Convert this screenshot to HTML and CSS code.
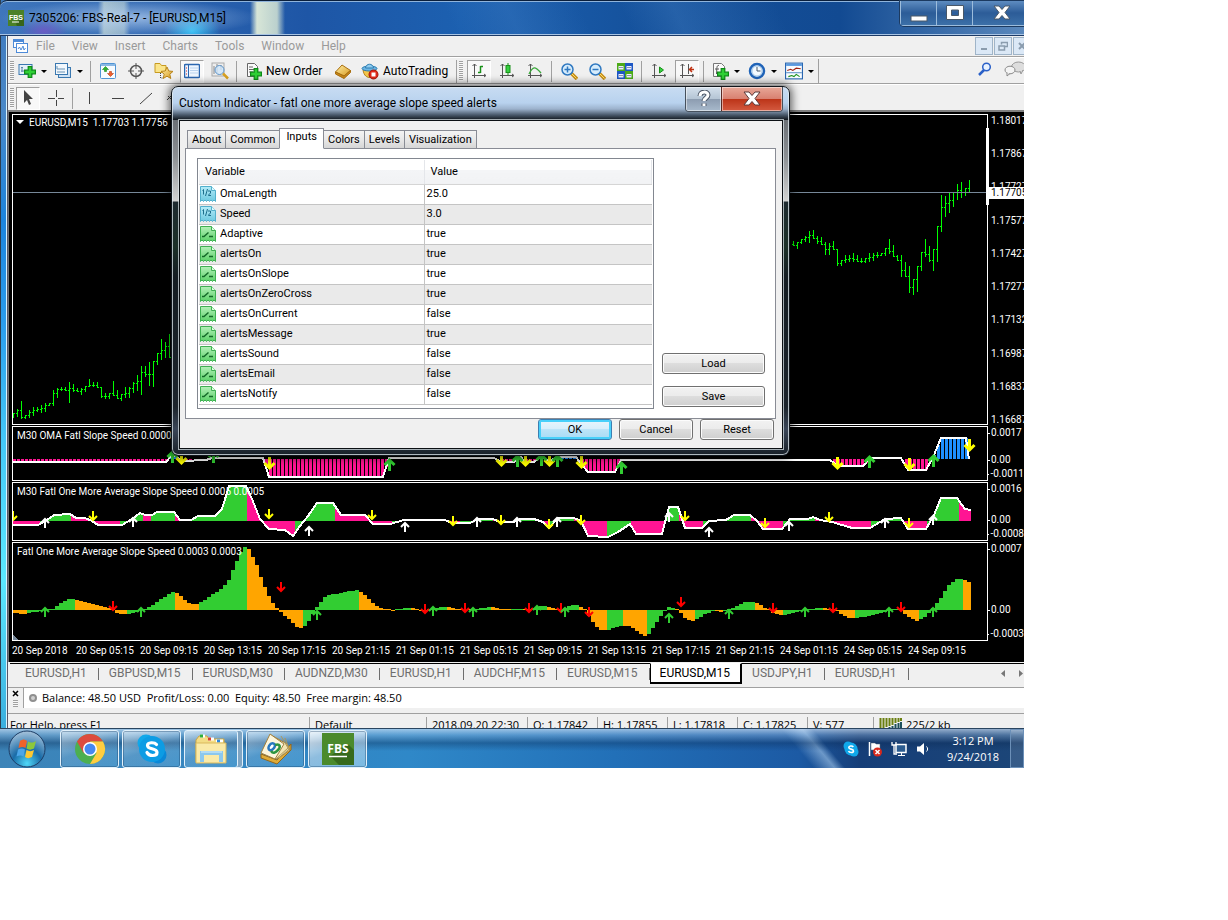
FILE: index.html
```html
<!DOCTYPE html>
<html lang="en">
<head>
  <meta charset="utf-8">
  <title>7305206: FBS-Real-7 - [EURUSD,M15]</title>
  <link rel="stylesheet" href="styles.css">
</head>
<body>
  <svg class="sprite" aria-hidden="true">
    <linearGradient id="greenFill" x1="0" y1="0" x2="0" y2="1"><stop offset="0" stop-color="#b4f0b8"/><stop offset="1" stop-color="#5ad068"/></linearGradient>
    <linearGradient id="blueFill" x1="0" y1="0" x2="0" y2="1"><stop offset="0" stop-color="#b6ecf8"/><stop offset="1" stop-color="#6cc8e0"/></linearGradient>
    <linearGradient id="goldFill" x1="0" y1="0" x2="1" y2="1"><stop offset="0" stop-color="#fff0a8"/><stop offset="1" stop-color="#d89a20"/></linearGradient>
    <symbol id="i-bool" viewBox="0 0 16 16">
      <path d="M.5.5h11l4 4v11l-1.500-1.500-1.500 1.500-1.500-1.500-1.500 1.500-1.500-1.500-1.500 1.500-1.500-1.500-1.500 1.500-1.500-1.500-1.500 1.500z" fill="url(#greenFill)" stroke="#3fb052"/>
      <path d="M11.500.5v4h4" fill="#e0ffe0" stroke="#3fb052"/>
      <path d="M2 10.500h2l4.500-4M9 10.500h4" fill="none" stroke="#146a28" stroke-width="1.500"/>
    </symbol>
    <symbol id="i-num" viewBox="0 0 16 16">
      <path d="M.5.5h11l4 4v11l-1.500-1.500-1.500 1.500-1.500-1.500-1.500 1.500-1.500-1.500-1.500 1.500-1.500-1.500-1.500 1.500-1.500-1.500-1.500 1.500z" fill="url(#blueFill)" stroke="#52b0cc"/>
      <path d="M11.500.5v4h4" fill="#e0faff" stroke="#52b0cc"/>
      <path d="M2.500 4.500l1-1v5M7.500 3l-2 7M8 5h2.500v2l-2 2v.5H11" fill="none" stroke="#1c6e8c"/>
    </symbol>
    <symbol id="i-plus" viewBox="0 0 10 10">
      <path d="M3.500.5h3v3h3v3h-3v3h-3v-3h-3v-3h3z" fill="#2fd035" stroke="#0d8a16"/>
    </symbol>
    <symbol id="i-axes" viewBox="0 0 16 16">
      <path d="M3.500 1v14M1.500 3l2-2 2 2M1 12.500h13.500M13 11l2 1.500-2 1.500" fill="none" stroke="#555"/>
    </symbol>
  </svg>

  <div class="desktop">
    <main class="app">
      <header class="titlebar">
        <svg class="logo" width="16" height="16" viewBox="0 0 16 16"><rect width="16" height="16" fill="#4b8128"/><path d="M8 14l5-9 3 4v7h-7z" fill="#37651a"/><text x="8" y="10" text-anchor="middle" class="logo-text">FBS</text><path d="M4 12h7" stroke="#fff"/></svg>
        <span class="title">7305206: FBS-Real-7 - [EURUSD,M15]</span>
        <div class="caption">
          <button aria-label="Minimize"><svg width="20" height="18"><rect x="2" y="12" width="16" height="5" fill="#fff" stroke="#4a5868"/></svg></button>
          <button aria-label="Maximize"><svg width="20" height="18"><path d="M1.500 1.500h17v14h-17zM6.500 6v5.500h7V6z" fill="#fff" fill-rule="evenodd" stroke="#4a5868"/></svg></button>
          <button class="wide" aria-label="Close"><svg width="20" height="18"><path d="M2 2h5l3 3.500L13 2h5l-5 6.500 5 6.500h-5l-3-3.500L7 15H2l5-6.500z" fill="#fff" stroke="#4a5868"/></svg></button>
        </div>
      </header>

      <div class="client">
        <nav class="menubar">
          <svg class="menu-icon" width="16" height="16" viewBox="0 0 16 16"><rect x="1.500" y="1.500" width="10" height="8" fill="#fff" stroke="#4d8bd8"/><path d="M2 3h9" stroke="#4d8bd8" stroke-width="2"/><rect x="4.500" y="5.500" width="11" height="9" fill="#fff" stroke="#4d8bd8"/><path d="M6 11l1.500-2 1.500 3 2-4 1 4 1.500-2" fill="none" stroke="#4d8bd8"/></svg>
          <a href="#">File</a><a href="#">View</a><a href="#">Insert</a><a href="#">Charts</a><a href="#">Tools</a><a href="#">Window</a><a href="#">Help</a>
          <div class="mdi">
            <button aria-label="Minimize chart"><svg width="10" height="10"><path d="M2 8h6" stroke="#8a9cae" stroke-width="2"/></svg></button>
            <button aria-label="Restore chart"><svg width="10" height="10"><path d="M3.500 3.500V1.500h6v4H7M1 5h5.500v4H1z" fill="none" stroke="#8a9cae" stroke-width="1.500"/></svg></button>
            <button aria-label="Close chart"><svg width="10" height="10"><path d="M2 2l6 6M8 2l-6 6" stroke="#8a9cae" stroke-width="2"/></svg></button>
          </div>
        </nav>

        <div class="toolbar">
          <i class="grip"></i>
          <button class="tool drop" aria-label="New chart"><svg width="18" height="18" viewBox="0 0 18 18"><rect x="1" y="2.500" width="13" height="10" fill="#e4f0fa" stroke="#3a78b0"/><path d="M4 10V5M3 6l1-1 1 1M3 9h5" stroke="#5d86a8" fill="none"/><use href="#i-plus" x="6" y="4" width="12" height="12"/></svg></button>
          <button class="tool drop" aria-label="Profiles"><svg width="18" height="18" viewBox="0 0 18 18"><rect x="4.500" y="5.500" width="12" height="10" fill="#cfe2f4" stroke="#3a78b0"/><rect x="1.500" y="1.500" width="12" height="11" fill="#f2f8fd" stroke="#3a78b0"/><path d="M3 4v3h8M3 10h8" fill="none" stroke="#6b93b5"/></svg></button>
          <i class="sep"></i>
          <button class="tool" aria-label="Market Watch"><svg width="16" height="16" viewBox="0 0 16 16"><rect x=".5" y=".5" width="15" height="15" rx="1" fill="#f6fbff" stroke="#4f94d4"/><path d="M1 2h14" stroke="#8ab8e4" stroke-width="2"/><path d="M5.500 3.500l3 3h-2v2h-2v-2h-2z" fill="#30b030" stroke="#178a17" stroke-width=".6"/><path d="M10.500 13.500l-3-3h2v-2h2v2h2z" fill="#f06030" stroke="#b83a10" stroke-width=".6"/></svg></button>
          <button class="tool" aria-label="Data Window"><svg width="16" height="16" viewBox="0 0 16 16"><circle cx="8" cy="8" r="5.500" fill="none" stroke="#555" stroke-width="1.500"/><path d="M8 0v6M8 10v6M0 8h6M10 8h6" stroke="#555"/></svg></button>
          <button class="tool" aria-label="Navigator"><svg width="20" height="18" viewBox="0 0 20 18"><path d="M1 1.500h5l1.500 2H12v7H1z" fill="#fbe58a" stroke="#c79a20"/><path d="M6.500 11v5h3" fill="none" stroke="#444" stroke-dasharray="1 1"/><path d="M13 5l1.800 4 4.200.4-3.200 2.800 1 4.300-3.800-2.300L9.200 16.500l1-4.300L7 9.400l4.200-.4z" fill="url(#goldFill)" stroke="#b8841a"/></svg></button>
          <button class="tool pressed" aria-label="Terminal"><svg width="16" height="16" viewBox="0 0 16 16"><rect x=".5" y="1.500" width="15" height="13" rx="1" fill="#eef6ff" stroke="#2a66b0" stroke-width="1.500"/><path d="M4.500 2v12" stroke="#2a66b0"/><path d="M2 5h1M2 8h1M2 11h1" stroke="#c22"/><path d="M6 5h8M6 7.500h8M6 10h8" stroke="#b9d2ee"/></svg></button>
          <button class="tool" aria-label="Strategy Tester"><svg width="18" height="18" viewBox="0 0 18 18"><rect x="1" y="1" width="12" height="13" fill="#eee" stroke="#aaa"/><path d="M3 4v8M6 2v9M10 3v5" stroke="#888"/><circle cx="8.500" cy="8" r="4.500" fill="#cfe6fa" fill-opacity=".8" stroke="#5c93c8"/><path d="M12 11.500l5 5" stroke="#d8a020" stroke-width="2.500"/></svg></button>
          <i class="sep"></i>
          <button class="tool order"><svg width="17" height="18" viewBox="0 0 17 18"><path d="M2.500 1.500h7l3 3v10h-10z" fill="#fafafa" stroke="#666"/><path d="M4 5h4M4 7.500h6M4 10h4" stroke="#666"/><use href="#i-plus" x="5" y="6" width="12" height="12"/></svg>New Order</button>
          <button class="tool" aria-label="MetaEditor"><svg width="18" height="18" viewBox="0 0 18 18"><path d="M1.500 10L8 3l8.500 5.500L10 14z" fill="url(#goldFill)" stroke="#a86e10"/><path d="M1.500 10v2L10 16.500l6.500-6v-2L10 14z" fill="#c98818" stroke="#a86e10"/></svg></button>
          <button class="tool auto"><svg width="18" height="18" viewBox="0 0 18 18"><path d="M2 8c1 6 4 7.500 7 7.500s5-2 6-7.500z" fill="#f3c54a" stroke="#b8841a"/><ellipse cx="8.500" cy="6.500" rx="7.500" ry="2.500" fill="#6db6e4" stroke="#2c7cb0"/><path d="M4.500 6C5 1 12 1 12.500 6z" fill="#8fccf0" stroke="#2c7cb0"/><circle cx="12.500" cy="12.500" r="4.500" fill="#e02818" stroke="#a81408"/><rect x="10.500" y="10.500" width="4" height="4" fill="#fff"/></svg>AutoTrading</button>
          <i class="grip"></i>
          <button class="tool pressed" aria-label="Bar Chart"><svg width="16" height="16" viewBox="0 0 16 16"><use href="#i-axes"/><path d="M9.500 3v7M9.500 3.500h2.500M7 9.500h2.500" stroke="#189018" stroke-width="1.500"/></svg></button>
          <button class="tool" aria-label="Candlesticks"><svg width="16" height="16" viewBox="0 0 16 16"><use href="#i-axes"/><path d="M9 0v12" stroke="#189018"/><rect x="7" y="2.500" width="4" height="7" fill="#35d040" stroke="#189018"/></svg></button>
          <button class="tool" aria-label="Line Chart"><svg width="16" height="16" viewBox="0 0 16 16"><use href="#i-axes"/><path d="M2 11c4-8 6-8 12-1" fill="none" stroke="#39a839" stroke-width="1.300"/></svg></button>
          <i class="sep"></i>
          <button class="tool" aria-label="Zoom In"><svg width="17" height="17" viewBox="0 0 17 17"><path d="M10 10l6 6" stroke="#c89018" stroke-width="3.500"/><path d="M10.500 10.500l5 5" stroke="#ffe070"/><circle cx="6.500" cy="6.500" r="5.500" fill="#d6ecfc" stroke="#2f78c0" stroke-width="1.500"/><path d="M3.500 6.500h6M6.500 3.500v6" stroke="#2f78c0" stroke-width="1.500"/></svg></button>
          <button class="tool" aria-label="Zoom Out"><svg width="17" height="17" viewBox="0 0 17 17"><path d="M10 10l6 6" stroke="#c89018" stroke-width="3.500"/><path d="M10.500 10.500l5 5" stroke="#ffe070"/><circle cx="6.500" cy="6.500" r="5.500" fill="#d6ecfc" stroke="#2f78c0" stroke-width="1.500"/><path d="M3.500 6.500h6" stroke="#2f78c0" stroke-width="1.500"/></svg></button>
          <button class="tool" aria-label="Tile Windows"><svg width="16" height="16" viewBox="0 0 16 16"><path d="M0 0h8v8H0zM8 8h8v8H8z" fill="#4caa18"/><path d="M8 0h8v8H8zM0 8h8v8H0z" fill="#1d57c4"/><path d="M1.500 3h5v3.500h-5zM9.500 3h5v3.500h-5zM1.500 11h5v3.500h-5zM9.500 11h5v3.500h-5z" fill="#eef"/><path d="M2 4.500h4M10 4.500h4M2 12.500h4M10 12.500h4" stroke="#89a"/></svg></button>
          <i class="sep"></i>
          <button class="tool" aria-label="Auto Scroll"><svg width="16" height="16" viewBox="0 0 16 16"><use href="#i-axes"/><path d="M8.500 4v6l4-3z" fill="#35d040" stroke="#189018"/></svg></button>
          <button class="tool pressed" aria-label="Chart Shift"><svg width="16" height="16" viewBox="0 0 16 16"><use href="#i-axes"/><path d="M9.500 1v10" stroke="#555"/><path d="M15 6.500h-4M13 4l-2.500 2.500L13 9" fill="none" stroke="#c03010" stroke-width="1.500"/></svg></button>
          <i class="sep"></i>
          <button class="tool drop late" aria-label="Indicators"><svg width="18" height="18" viewBox="0 0 18 18"><path d="M2.500 1.500h8l3 3v10h-11z" fill="#fafafa" stroke="#777"/><path d="M8 3.500C5.500 3 6 6 5.500 12M4 7h4" fill="none" stroke="#555"/><use href="#i-plus" x="6" y="6" width="12" height="12"/></svg></button>
          <button class="tool drop late" aria-label="Periods"><svg width="18" height="18" viewBox="0 0 18 18"><circle cx="9" cy="9" r="7" fill="#f4faff" stroke="#1f63b8" stroke-width="2.500"/><circle cx="9" cy="9" r="5" fill="none" stroke="#90bce4" stroke-width=".8"/><path d="M9 5v4h3.500" fill="none" stroke="#456"/></svg></button>
          <button class="tool drop late" aria-label="Templates"><svg width="18" height="18" viewBox="0 0 16 16"><rect x=".5" y="1" width="15" height="14" fill="#f8fcff" stroke="#2a66b0"/><path d="M1 2.500h14" stroke="#5a9ae0" stroke-width="2"/><path d="M2 7.500l3-1 2 1 3-2 4 .5" fill="none" stroke="#a02010"/><path d="M1 9.500h14" stroke="#6a9ac8"/><path d="M3 13l3-1 2 1 2-2 3 2" fill="none" stroke="#189018"/></svg></button>
          <i class="bar-end"></i>
          <div class="right-tools">
            <button aria-label="Search"><svg width="14" height="14" viewBox="0 0 14 14"><path d="M6 8l-5 5" stroke="#2a60c8" stroke-width="2.500"/><circle cx="8.500" cy="5" r="3.800" fill="#e8f2ff" stroke="#2a60c8" stroke-width="1.500"/></svg></button>
            <button aria-label="Messages"><svg width="22" height="16" viewBox="0 0 22 16"><ellipse cx="14.500" cy="6" rx="7" ry="5" fill="#ddd" stroke="#999"/><path d="M16 10l1 3 2-4" fill="#ddd" stroke="#999"/><ellipse cx="6" cy="9" rx="5" ry="3.800" fill="#f4f4f4" stroke="#888"/><path d="M3 12v3l3-2.500" fill="#f4f4f4" stroke="#888"/></svg></button>
          </div>
        </div>

        <div class="toolbar lines">
          <i class="grip"></i>
          <button class="tool pressed" aria-label="Cursor"><svg width="16" height="18" viewBox="0 0 16 18"><path d="M4 1v13l3-3 2 5 2-1-2-5h4z" fill="#444"/></svg></button>
          <button class="tool" aria-label="Crosshair"><svg width="16" height="16"><path d="M8.500 0v7M8.500 10v6M0 8.500h7M10 8.500h6" stroke="#444"/></svg></button>
          <i class="sep"></i>
          <button class="tool" aria-label="Vertical Line"><svg width="16" height="16"><path d="M7.500 2v12" stroke="#444"/></svg></button>
          <button class="tool" aria-label="Horizontal Line"><svg width="16" height="16"><path d="M2 8.500h12" stroke="#444"/></svg></button>
          <button class="tool" aria-label="Trendline"><svg width="16" height="16"><path d="M2 14L14 3" stroke="#444"/></svg></button>
          <button class="tool" aria-label="Channel"><svg width="16" height="16"><path d="M1 10l8-8M5 14l9-9M2 6l8 8" stroke="#444"/></svg></button>
        </div>

        <section class="charts">
          <div class="panel">
            <div class="plot main-plot">
              <svg id="price" width="974" height="309" viewBox="13 115 974 309"></svg>
              <span class="plot-label"><i class="tri"></i>EURUSD,M15&nbsp; 1.17703 1.17756 1.17697 1.17705</span>
              <i class="scale-mark"></i>
            </div>
            <ul class="axis price-axis">
              <li>1.18017</li><li>1.17867</li><li>1.17727</li><li>1.17577</li><li>1.17427</li>
              <li>1.17277</li><li>1.17132</li><li>1.16987</li><li>1.16837</li><li>1.16687</li>
              <li class="last-price">1.17705</li>
            </ul>
          </div>
          <div class="panel">
            <div class="plot">
              <svg id="oma" width="974" height="53" viewBox="13 427 974 53"></svg>
              <span class="plot-label">M30 OMA Fatl Slope Speed 0.0000 0.0013</span>
            </div>
            <ul class="axis"><li>0.0017</li><li>0.00</li><li>-0.0011</li></ul>
          </div>
          <div class="panel">
            <div class="plot">
              <svg id="slope" width="974" height="57" viewBox="13 483 974 57"></svg>
              <span class="plot-label">M30 Fatl One More Average Slope Speed 0.0005 0.0005</span>
            </div>
            <ul class="axis"><li>0.0016</li><li>0.00</li><li>-0.0008</li></ul>
          </div>
          <div class="panel">
            <div class="plot">
              <svg id="speed" width="974" height="97" viewBox="13 543 974 97"></svg>
              <span class="plot-label">Fatl One More Average Slope Speed 0.0003 0.0003</span>
            </div>
            <ul class="axis tall"><li>0.0007</li><li>0.00</li><li>-0.0003</li></ul>
          </div>
          <div class="times">
            <span>20 Sep 2018</span><span>20 Sep 05:15</span><span>20 Sep 09:15</span><span>20 Sep 13:15</span><span>20 Sep 17:15</span>
            <span>20 Sep 21:15</span><span>21 Sep 01:15</span><span>21 Sep 05:15</span><span>21 Sep 09:15</span><span>21 Sep 13:15</span>
            <span>21 Sep 17:15</span><span>21 Sep 21:15</span><span>24 Sep 01:15</span><span>24 Sep 05:15</span><span>24 Sep 09:15</span>
          </div>
        </section>

        <nav class="chart-tabs">
          <a href="#">EURUSD,H1</a><a href="#">GBPUSD,M15</a><a href="#">EURUSD,M30</a><a href="#">AUDNZD,M30</a><a href="#">EURUSD,H1</a><a href="#">AUDCHF,M15</a><a href="#">EURUSD,M15</a><a href="#" class="active">EURUSD,M15</a><a href="#">USDJPY,H1</a><a href="#">EURUSD,H1</a>
          <div class="scrollers">
            <button aria-label="Scroll left"><svg width="6" height="8"><path d="M5 0v7L1 3.500z" fill="#777"/></svg></button>
            <button aria-label="Scroll right"><svg width="6" height="8"><path d="M1 0v7l4-3.500z" fill="#777"/></svg></button>
          </div>
        </nav>

        <div class="terminal">
          <div class="terminal-side">
            <button aria-label="Close terminal"><svg width="7" height="7"><path d="M1 1l5 5M6 1L1 6" stroke="#000" stroke-width="1.500"/></svg></button>
            <i></i>
          </div>
          <div class="balance"><i class="dot"></i>Balance: 48.50 USD&nbsp; Profit/Loss: 0.00&nbsp; Equity: 48.50&nbsp; Free margin: 48.50</div>
        </div>

        <footer class="statusbar">
          <span class="help">For Help, press F1</span>
          <span class="profile">Default</span>
          <span class="date">2018.09.20 22:30</span>
          <span>O: 1.17842</span>
          <span>H: 1.17855</span>
          <span>L: 1.17818</span>
          <span>C: 1.17825</span>
          <span class="vol">V: 577</span>
          <span class="traffic"><svg width="23" height="11"><path d="M1.500 0v10M4.500 0v10M7.500 0v9M10.500 0v8M13.500 0v7M16.500 0v5M19.500 0v4M22 0v3" stroke="#6a7f10" stroke-width="2"/><path d="M10.500 9v2M13.500 8v3M16.500 6v5M19.500 5v6M22 4v7" stroke="#1c4f5c" stroke-width="2"/></svg>225/2 kb</span>
        </footer>
      </div>
    </main>

    <div class="taskbar">
      <button class="orb" aria-label="Start"><svg width="38" height="38" viewBox="0 0 38 38"><defs><radialGradient id="orbFill" cx=".5" cy=".9" r=".9"><stop offset="0" stop-color="#4fd8f8"/><stop offset=".45" stop-color="#1a6ca8"/><stop offset="1" stop-color="#a8c4dc"/></radialGradient></defs><circle cx="19" cy="19" r="18" fill="url(#orbFill)" stroke="#1c3d66"/><path d="M12 11c3-2 5-2 7 0l-1.500 7c-2-1.500-4-1.500-7 0z" fill="#f0632a"/><path d="M20 11.500c2 1.500 5 1.500 8-.5l-2 7.500c-3 1.500-5 1.500-7.500 0z" fill="#8cc83c"/><path d="M10 19.500c3-1.500 5-1.500 7 0l-1.500 7c-2-1.500-4-1.500-7 0z" fill="#4ca6e8"/><path d="M18.500 20c2.500 1.500 5 1.500 7.500 0l-2 7c-3 1.500-5 1.500-7 0z" fill="#fcc832"/></svg></button>
      <div class="tasks">
        <button aria-label="Chrome"><svg width="32" height="32" viewBox="0 0 32 32"><circle cx="16" cy="16" r="15" fill="#4caf50"/><path d="M16 16L3 8.500A15 15 0 0 1 29 8.500H16z" fill="#dd4b3e"/><path d="M16 8.500h13A15 15 0 0 1 16 31l6.500-11z" fill="#ffcd40"/><path d="M3 8.500L9.500 20 16 8.500z" fill="#dd4b3e"/><circle cx="16" cy="16" r="7" fill="#fff"/><circle cx="16" cy="16" r="5.500" fill="#4688f0"/></svg></button>
        <button aria-label="Skype"><svg width="32" height="32" viewBox="0 0 32 32"><circle cx="10" cy="10" r="8.500" fill="#10a8ea"/><circle cx="22" cy="22" r="8.500" fill="#0a88d8"/><circle cx="16" cy="16" r="13" fill="#0d9ce4"/><path d="M20.500 11.500c-2-2.500-9-2.500-9 1 0 4.500 9.500 2 9.500 7 0 4-8 4-10 0" fill="none" stroke="#fff" stroke-width="3.200" stroke-linecap="round"/></svg></button>
        <button class="stack" aria-label="Explorer"><svg width="34" height="32" viewBox="0 0 34 32"><path d="M2 7l3-4h8l2 3h15v23H2z" fill="#f3dc84" stroke="#c9a545"/><path d="M6 3h5M14 6h6M22 8h7" stroke="#fff" stroke-width="3"/><path d="M6 3h3" stroke="#2fae3c" stroke-width="3"/><path d="M14 6h3" stroke="#d84030" stroke-width="3"/><path d="M23 8h3" stroke="#3088d8" stroke-width="3"/><path d="M2 10h30v20H2z" fill="#faeaa8" stroke="#d9b95c"/><path d="M8 29v-9h19v9" fill="none" stroke="#8cc8ee" stroke-width="4"/><path d="M7 19h21" stroke="#d6effc"/></svg></button>
        <button aria-label="MetaEditor"><svg width="34" height="32" viewBox="0 0 34 32"><path d="M2 21v4l16 6 14-14v-6L18 27z" fill="#e0ac38" stroke="#94671a"/><path d="M12 2l16 9 3 6-13 9L3 19z" fill="#f4e6b4" stroke="#a08040"/><path d="M22 3l7 12-11 10M26 5l4 11-10 9" fill="none" stroke="#b09858"/><path d="M11 1l14 10-9 15L2 20z" fill="#fdf6dc" stroke="#a08040"/><path d="M10 13c3-5 8-2 5 2s-7 2-5-2z" fill="#fff" stroke="#2878c0" stroke-width="2.500"/><path d="M16 12c5-2 6 2 3 5s-5 4-7 1" fill="none" stroke="#2d9440" stroke-width="2.500"/></svg></button>
        <button class="current" aria-label="FBS"><svg width="32" height="32" viewBox="0 0 32 32"><rect width="32" height="32" fill="#4b8a2c"/><path d="M26 11l6 6v15H17l-9-9z" fill="#376a1c"/><text x="16" y="20" text-anchor="middle" class="fbs-text">FBS</text><path d="M7 23.500h18" stroke="#fff" stroke-width="1.500"/></svg></button>
      </div>
      <div class="tray">
        <svg width="16" height="16" viewBox="0 0 16 16"><circle cx="5" cy="5" r="4.500" fill="#10a8ea"/><circle cx="11" cy="11" r="4.500" fill="#10a8ea"/><circle cx="8" cy="8" r="6.500" fill="#10a8ea"/><path d="M10.300 6c-1-1.500-4.500-1.300-4.500.5 0 2.200 4.700 1 4.700 3.400 0 2-4 2-5 .2" fill="none" stroke="#fff" stroke-width="1.600"/></svg>
        <svg width="16" height="16" viewBox="0 0 16 16"><path d="M2.500 1v14" stroke="#fff" stroke-width="1.500"/><path d="M4 2h4l1 1h4v6H4z" fill="#fff" stroke="#567" stroke-width=".5"/><circle cx="10.500" cy="11" r="4.500" fill="#d8281c"/><path d="M8.500 9l4 4M12.500 9l-4 4" stroke="#fff" stroke-width="1.500"/></svg>
        <svg width="16" height="16" viewBox="0 0 16 16"><path d="M5 3.500h10v8H5z" fill="#2c5c90" stroke="#fff" stroke-width="1.500"/><path d="M7 14.500h7M10.500 12v2" stroke="#fff"/><path d="M1 1v3h4V1M3 4v9h3" fill="none" stroke="#fff" stroke-width="1.300"/></svg>
        <svg width="16" height="16" viewBox="0 0 16 16"><path d="M2 5.500h3L9 2v12l-4-3.500H2z" fill="#fff"/><path d="M11.500 5.500c1.500 1.500 1.500 3.500 0 5" fill="none" stroke="#fff"/></svg>
      </div>
      <div class="clock"><span>3:12 PM</span><span>9/24/2018</span></div>
      <button class="show-desktop" aria-label="Show desktop"></button>
    </div>

    <section class="dialog" role="dialog" aria-label="Custom Indicator">
      <header class="dialog-title">
        <span>Custom Indicator - fatl one more average slope speed alerts</span>
        <div class="dialog-caption">
          <button aria-label="Help"><svg width="16" height="18" viewBox="0 0 16 18"><path d="M4 6c0-5 8-5 8-1 0 3-4 3-4 6M8 13.500v2.500" fill="none" stroke="#4a5464" stroke-width="5"/><path d="M4 6c0-5 8-5 8-1 0 3-4 3-4 6M8 13.500v2.500" fill="none" stroke="#fff" stroke-width="3"/></svg></button>
          <button class="close" aria-label="Close"><svg width="20" height="18"><path d="M2 2h5l3 3.500L13 2h5l-5 6.500 5 6.500h-5l-3-3.500L7 15H2l5-6.500z" fill="#fff" stroke="#5a3a3a"/></svg></button>
        </div>
      </header>
      <div class="dialog-body">
        <div class="tabs">
          <button>About</button><button>Common</button><button class="active">Inputs</button><button>Colors</button><button>Levels</button><button>Visualization</button>
        </div>
        <div class="tab-panel">
          <div class="list">
            <table>
              <thead><tr><th>Variable</th><th>Value</th></tr></thead>
              <tbody>
                <tr><td><svg class="type"><use href="#i-num"/></svg>OmaLength</td><td>25.0</td></tr>
                <tr><td><svg class="type"><use href="#i-num"/></svg>Speed</td><td>3.0</td></tr>
                <tr><td><svg class="type"><use href="#i-bool"/></svg>Adaptive</td><td>true</td></tr>
                <tr><td><svg class="type"><use href="#i-bool"/></svg>alertsOn</td><td>true</td></tr>
                <tr><td><svg class="type"><use href="#i-bool"/></svg>alertsOnSlope</td><td>true</td></tr>
                <tr><td><svg class="type"><use href="#i-bool"/></svg>alertsOnZeroCross</td><td>true</td></tr>
                <tr><td><svg class="type"><use href="#i-bool"/></svg>alertsOnCurrent</td><td>false</td></tr>
                <tr><td><svg class="type"><use href="#i-bool"/></svg>alertsMessage</td><td>true</td></tr>
                <tr><td><svg class="type"><use href="#i-bool"/></svg>alertsSound</td><td>false</td></tr>
                <tr><td><svg class="type"><use href="#i-bool"/></svg>alertsEmail</td><td>false</td></tr>
                <tr><td><svg class="type"><use href="#i-bool"/></svg>alertsNotify</td><td>false</td></tr>
              </tbody>
            </table>
          </div>
          <div class="side">
            <button class="btn">Load</button>
            <button class="btn">Save</button>
          </div>
        </div>
        <div class="actions">
          <button class="btn default">OK</button>
          <button class="btn">Cancel</button>
          <button class="btn">Reset</button>
        </div>
      </div>
    </section>
  </div>

  <script src="charts.js"></script>
</body>
</html>
```

FILE: styles.css
```css
* {
  box-sizing: border-box;
}
body {
  margin: 0;
  background: #fff;
  font-family: "Open Sans", "Noto Sans", sans-serif;
  font-size: 11px;
  line-height: 16px;
  color: #000;
}
button {
  font: inherit;
  color: inherit;
  background: none;
  border: none;
  padding: 0;
}
a {
  color: inherit;
  text-decoration: none;
}
ul {
  list-style: none;
  margin: 0;
  padding: 0;
}
.sprite {
  position: absolute;
  width: 0;
  height: 0;
}
.desktop {
  position: relative;
  width: calc(100% - 204px);
  overflow: hidden;
  white-space: nowrap;
}
.title, .menubar, .order, .auto, .chart-tabs, .dialog-title {
  font-family: Roboto, "Noto Sans", sans-serif;
  font-size: 12px;
}

/* main window */
.app {
  padding-left: 8px;
  background: linear-gradient(90deg, #2c3e50 0, #2c3e50 1px, transparent 1px, transparent 6px, #d8f4ff 6px, #d8f4ff 7px, #556 7px, #556 8px, transparent 8px),
    linear-gradient(#3d78bc 0, #4a88c8 110px, #1c84dc 220px, #2a9cec 320px, #44c8f8 440px, #5be8ff 580px, #3aaede 728px);
}
.titlebar {
  display: flex;
  height: 36px;
  margin-left: -8px;
  padding-left: 8px;
  align-items: flex-start;
  border-top: 1px solid #0a1f3c;
  border-bottom: 1px solid #1c3a66;
  border-top-left-radius: 7px;
  box-shadow: inset 0 1px #8fb4dc, inset 0 -1px #a8c4e4;
  background:
    radial-gradient(ellipse 24px 12px at 44px 30px, #6a5cc4, transparent),
    radial-gradient(ellipse 130px 18px at 130px 17px, rgba(190, 215, 245, .7), transparent),
    linear-gradient(90deg, transparent 98px, rgba(235, 245, 220, .6) 104px, rgba(225, 238, 215, .5) 124px, transparent 130px),
    radial-gradient(ellipse 28px 22px at 192px 30px, #38c0f4, transparent),
    linear-gradient(90deg, transparent 250px, rgba(235, 245, 220, .9) 257px, rgba(225, 238, 215, .8) 277px, transparent 285px),
    linear-gradient(65deg, transparent 44%, rgba(90, 150, 215, .2) 50%, transparent 57%, transparent 61%, rgba(90, 150, 215, .25) 66%, transparent 76%),
    linear-gradient(90deg, #3f76bc, #1e56a6 30%, #1c60b0 45%, #14509a 65%, #124a92 82%, #5a88bc);
}
.logo {
  margin-top: 9px;
}
.logo-text {
  font: bold 7px "Liberation Sans", sans-serif;
  fill: #fff;
}
.title {
  margin: 9px 0 0 5px;
}
.caption {
  display: flex;
  margin: 0 -8px 0 auto;
  border: 1px solid #9cbcdc;
  border-top: none;
  border-radius: 0 0 4px 4px;
  box-shadow: 0 0 0 1px #1c3a60;
}
.caption button {
  width: 36px;
  height: 24px;
  line-height: 0;
  border-right: 1px solid #9cbcdc;
  background: linear-gradient(#5e8cc0, #2c5c98 50%, #3c70a8);
}
.caption .wide {
  width: 58px;
}
.client {
  background: #f0f0f0;
}
.menubar {
  display: flex;
  align-items: center;
  height: 21px;
  padding-left: 4px;
  color: #9a9a9a;
  border-bottom: 1px solid #a0a0a0;
}
.menubar a {
  margin-left: 17px;
}
.menu-icon + a {
  margin-left: 8px;
}
.mdi {
  display: flex;
  gap: 1px;
  margin: 0 -7px 0 auto;
}
.mdi button {
  width: 18px;
  height: 18px;
  border: 1px solid #9fb4c8;
  background: #dbe8f6;
  line-height: 0;
}

/* toolbars */
.toolbar {
  display: flex;
  align-items: center;
  height: 27px;
  padding-top: 2px;
  border-bottom: 1px solid #a0a0a0;
  box-shadow: inset 0 1px #fff;
}
.lines {
  height: 28px;
  border-bottom: 2px solid #808080;
}
.grip {
  width: 4px;
  height: 20px;
  margin: 0 2px;
  background: repeating-linear-gradient(#a0a0a0 0, #a0a0a0 1px, #f8f8f8 1px, #f8f8f8 2px);
}
.lines .grip {
  margin-right: 0;
}
.sep {
  width: 1px;
  height: 21px;
  margin: 0 3px 0 2px;
  background: #a0a0a0;
}
.bar-end {
  width: 1px;
  height: 25px;
  background: #a0a0a0;
}
.tool {
  display: flex;
  flex: none;
  align-items: center;
  justify-content: center;
  width: 28px;
  height: 23px;
}
.pressed {
  background: #f8f8f8;
  border: 1px solid;
  border-color: #a0a0a0 #fff #fff #a0a0a0;
  width: 24px;
  margin: 0 2px;
}
.drop {
  width: 36px;
  justify-content: flex-start;
  padding-left: 2px;
}
.late {
  width: 37px;
  padding-left: 4px;
}
.drop::after {
  content: "";
  margin-left: 5px;
  border: 3px solid transparent;
  border-top-color: #000;
  border-bottom: none;
}
.order, .auto {
  gap: 4px;
  justify-content: flex-start;
}
.order {
  width: 89px;
  padding-left: 5px;
}
.auto {
  width: 100px;
  padding-left: 4px;
  border-right: 1px solid #a0a0a0;
}
.right-tools {
  display: flex;
  gap: 12px;
  margin: 0 -2px 0 auto;
  align-items: center;
}

/* charts */
.charts {
  display: flex;
  flex-direction: column;
  gap: 1px;
  height: 550px;
  padding: 2px 0 0 3px;
  background: #000;
  border-left: 1px solid #707070;
  color: #fff;
  font-family: Roboto, "Noto Sans", sans-serif;
  font-size: 10px;
  line-height: 14px;
}
.panel {
  display: flex;
}
.plot {
  position: relative;
  flex: 1;
  min-width: 0;
  border: 1px solid #fff;
}
.plot svg {
  display: block;
  shape-rendering: crispEdges;
}
.plot-label {
  position: absolute;
  left: 4px;
  top: 2px;
}
.tri {
  display: inline-block;
  margin: 0 5px 2px -1px;
  border: 4px solid transparent;
  border-top-color: #fff;
  border-bottom: none;
}
.main-plot .plot-label {
  top: 1px;
}
.scale-mark {
  position: absolute;
  right: -2px;
  top: 13px;
  width: 3px;
  height: 77px;
  background: #fff;
}
.axis {
  display: flex;
  flex-direction: column;
  position: relative;
  width: 36px;
}
.axis li {
  display: flex;
  align-items: center;
  gap: 1px;
}
.axis li::before {
  content: "";
  width: 2px;
  height: 1px;
  background: #fff;
}
.axis li:nth-child(2) {
  margin-top: auto;
}
.tall li:nth-child(2) {
  margin-bottom: 10px;
}
.price-axis {
  justify-content: space-between;
  margin-bottom: -2px;
}
.price-axis li {
  gap: 3px;
}
.price-axis li:nth-child(2) {
  margin-top: 0;
}
.price-axis .last-price {
  position: absolute;
  left: 0;
  top: 73px;
  width: 36px;
  height: 12px;
  line-height: 12px;
  color: #000;
  background: #fff;
}
.times {
  display: flex;
  line-height: 18px;
}
.times span {
  flex: none;
  width: 64px;
}

.chart-tabs {
  display: flex;
  height: 25px;
  padding: 1px 0 3px 2px;
  color: #6e6e6e;
  line-height: 18px;
}
.chart-tabs a {
  padding: 0 12px 0 10px;
  border-top: 1px solid #000;
  background: linear-gradient(#6e6e6e, #6e6e6e) right 4px / 1px 12px no-repeat;
}
.chart-tabs a:first-child {
  padding-left: 15px;
}
.chart-tabs .active {
  color: #000;
  background: #fff;
  border: 1px solid #000;
  border-top: 1px solid #fff;
  border-width: 1px 2px 2px 1px;
  padding: 0 10px 0 9px;
}
.scrollers {
  display: flex;
  flex: 1;
  gap: 12px;
  justify-content: flex-end;
  border-top: 1px solid #000;
}
.terminal {
  display: flex;
  height: 27px;
  padding-bottom: 5px;
  border-top: 1px solid #a0a0a0;
  border-bottom: 1px solid #a0a0a0;
}
.terminal-side {
  width: 15px;
  padding: 2px 4px;
  line-height: 0;
}
.terminal-side i {
  display: block;
  width: 5px;
  height: 7px;
  margin: 3px 1px;
  background: repeating-linear-gradient(#a0a0a0 0, #a0a0a0 1px, #f8f8f8 1px, #f8f8f8 2px);
}
.balance {
  flex: 1;
  display: flex;
  align-items: center;
  padding-left: 5px;
  background: #fff;
  border-left: 1px solid #a0a0a0;
}
.dot {
  width: 8px;
  height: 8px;
  margin-right: 5px;
  border: 2px solid #909090;
  border-radius: 50%;
  background: #d0d0d0;
}
.statusbar {
  display: flex;
  height: 14px;
  padding-top: 3px;
  overflow: hidden;
}
.statusbar span {
  flex: none;
  width: 70px;
  height: 16px;
  padding-left: 5px;
  border-left: 1px solid #a0a0a0;
}
.statusbar .help {
  width: 301px;
  padding-left: 2px;
  border: none;
}
.statusbar .profile {
  width: 117px;
}
.statusbar .date {
  width: 101px;
}
.statusbar .vol {
  width: 66px;
}
.statusbar .traffic {
  flex: 1;
}
.traffic svg {
  margin-right: 4px;
}

/* taskbar */
.taskbar {
  display: flex;
  align-items: center;
  height: 40px;
  border-top: 1px solid #2a4560;
  background:
    linear-gradient(rgba(215, 232, 250, .65), rgba(170, 200, 230, .35) 6px, rgba(10, 40, 80, .35) 14px, transparent 22px),
    linear-gradient(50deg, transparent 77%, rgba(190, 225, 255, .5) 79%, transparent 80%),
    linear-gradient(90deg, #3d84b8 0, #2f88c8 40%, #2270b8 60%, #1c5aa4 78%, #163e78 84%, #1c4678);
  color: #fff;
}
.orb {
  flex: none;
  width: 60px;
  padding-right: 6px;
  line-height: 0;
}
.tasks {
  display: flex;
  gap: 3px;
}
.tasks button {
  width: 59px;
  height: 38px;
  border: 1px solid #e2f1fb;
  border-radius: 3px;
  box-shadow: inset 0 0 0 1px rgba(20, 60, 100, .35);
  background: linear-gradient(160deg, rgba(255, 255, 255, .55), rgba(255, 255, 255, .15) 50%, rgba(120, 200, 240, .25));
  line-height: 0;
}
.tasks .stack {
  box-shadow: inset -4px 0 rgba(30, 90, 140, .5), inset -5px 0 #e2f1fb;
  padding-right: 5px;
}
.tasks .current {
  background: linear-gradient(160deg, rgba(255, 255, 255, .85), rgba(255, 255, 255, .45) 50%, rgba(170, 220, 245, .6));
}
.fbs-text {
  font: bold 12px "Open Sans", sans-serif;
  fill: #fff;
}
.tray {
  display: flex;
  gap: 8px;
  margin: 0 5px 0 auto;
}
.clock {
  display: flex;
  flex-direction: column;
  width: 74px;
  text-align: center;
}
.show-desktop {
  width: 14px;
  height: 39px;
  border: 1px solid #6c90b8;
  background: rgba(255, 255, 255, .12);
}

/* indicator dialog */
.dialog {
  position: absolute;
  left: 171px;
  top: 86px;
  width: 619px;
  padding: 0 6px 6px 7px;
  border: 1px solid #10161c;
  border-radius: 7px;
  box-shadow: inset 0 0 0 1px rgba(225, 235, 240, .75), 0 0 8px 2px rgba(0, 0, 0, .6);
  background:
    linear-gradient(#c8dcf2 0, #b8d2ee 16px, #9cb2cc 22px, #48586a 28px, #10161c 33px, transparent 33px),
    linear-gradient(#6b7076 33px, #8c9094 70px, #d2d2d2 114px, #1e2a30 115px, #1c3028 160px, #141c22 190px, #1c242c 320px, #3a4658 342px, #182028);
}
.dialog-title {
  display: flex;
  height: 33px;
  align-items: flex-start;
}
.dialog-title span {
  margin-top: 8px;
}
.dialog-caption {
  display: flex;
  margin-left: auto;
  border: 1px solid #46505c;
  border-top: none;
  border-radius: 0 0 4px 4px;
  overflow: hidden;
}
.dialog-caption button {
  width: 35px;
  height: 24px;
  line-height: 0;
  background: linear-gradient(#d4e0ec, #b4c4d4 50%, #8c9cb0 50%, #a8bacc);
  box-shadow: inset 0 0 0 1px rgba(255, 255, 255, .5);
}
.dialog-caption .close {
  width: 61px;
  background: linear-gradient(#e8a898, #d88070 50%, #bc3418 50%, #d45a40);
  border-left: 1px solid #5a2a24;
}
.dialog-body {
  padding: 7px 6px 8px 5px;
  background: #f0f0f0;
  border: 1px solid #0c1014;
  outline: 1px solid rgba(225, 235, 240, .7);
  font-family: Roboto, "Liberation Sans", sans-serif;
}
.tabs {
  display: flex;
  align-items: flex-end;
  height: 21px;
  padding-left: 2px;
}
.tabs button {
  height: 19px;
  padding: 0 4px;
  border: 1px solid #898c95;
  border-right-width: 0;
  background: linear-gradient(#f4f4f4, #e8e8e8 50%, #d6d6d6);
}
.tabs button:last-child {
  border-right-width: 1px;
}
.tabs .active {
  height: 21px;
  padding: 0 6px 3px;
  border-right-width: 1px;
  border-bottom-color: #fff;
  background: #fff;
}
.tabs .active + button {
  border-left: none;
}
.tab-panel {
  display: flex;
  gap: 8px;
  margin-top: -1px;
  padding: 9px 10px 9px 11px;
  border: 1px solid #898c95;
  background: #fff;
}
.list {
  flex: 1;
  height: 251px;
  padding: 1px;
  border: 1px solid #828790;
}
table {
  width: 100%;
  border-collapse: collapse;
  table-layout: fixed;
}
th {
  height: 24px;
  padding: 1px 6px 0;
  font-weight: normal;
  text-align: left;
  border-right: 1px solid #e4e6ea;
  border-bottom: 1px solid #d5d5d5;
  background: linear-gradient(#fff 40%, #f4f5f7 40%, #f1f2f4);
}
th:first-child {
  width: 225px;
}
td {
  height: 20px;
  padding: 0 2px;
  border-bottom: 1px solid #c4c4c4;
}
td:first-child {
  border-right: 1px solid #c4c4c4;
  padding-left: 1px;
}
tbody tr:nth-child(even) {
  background: #eaeaea;
}
.type {
  float: left;
  width: 16px;
  height: 16px;
  margin-right: 4px;
}
.side {
  display: flex;
  flex-direction: column;
  justify-content: flex-end;
  gap: 12px;
  width: 103px;
  padding-bottom: 2px;
}
.btn {
  width: 74px;
  height: 21px;
  border: 1px solid #707070;
  border-radius: 3px;
  box-shadow: inset 0 0 0 1px #fcfcfc;
  background: linear-gradient(#f2f2f2, #ebebeb 50%, #dddddd 50%, #cfcfcf);
}
.side .btn {
  width: 103px;
}
.btn.default {
  border-color: #3c7fb1;
  box-shadow: inset 0 0 0 2px #48d0fa;
  background: linear-gradient(#e8f5fc, #d6eefb 50%, #bce4f8 50%, #a8dbf4);
}
.actions {
  display: flex;
  justify-content: flex-end;
  gap: 7px;
  padding-right: 2px;
}
```

FILE: charts.js
```js
const NS = 'http://www.w3.org/2000/svg';
const GREEN = '#32cd32', PINK = '#ff1493', ORANGE = '#ffa500', BLUE = '#1e90ff';

function add(svg, tag, attrs) {
  const el = document.createElementNS(NS, tag);
  for (const k in attrs) el.setAttribute(k, attrs[k]);
  svg.appendChild(el);
}

// linear interpolation over a flat [x, v, x, v, ...] list
function valueAt(points, x) {
  for (let i = 0; i < points.length - 2; i += 2) {
    if (x >= points[i] && x <= points[i + 2]) {
      const t = (x - points[i]) / (points[i + 2] - points[i]);
      return points[i + 1] + t * (points[i + 3] - points[i + 1]);
    }
  }
  return 0;
}

function colorAt(runs, x) {
  for (let i = 0; i < runs.length; i += 2) if (x < runs[i]) return runs[i + 1];
  return runs[runs.length - 1];
}

function arrows(svg, list, up, color, big) {
  const h = big ? 6 : 5, w = big ? 5 : 4, s = up ? -1 : 1;
  for (let i = 0; i < list.length; i += 2) {
    const x = big ? list[i] + .5 : list[i], y = list[i + 1];
    const d = `M${x} ${y - s * h}V${y + s * (h - 1)}M${x - w} ${y + s * (h - 1 - w)}L${x} ${y + s * (h - 1)}L${x + w} ${y + s * (h - 1 - w)}`;
    add(svg, 'path', { d, fill: 'none', stroke: color, 'stroke-width': big ? 3 : 2, 'shape-rendering': 'auto' });
  }
}

function line(svg, points, base) {
  let p = '';
  for (let i = 0; i < points.length; i += 2) p += points[i] + ',' + (base - points[i + 1]) + ' ';
  add(svg, 'polyline', { points: p, fill: 'none', stroke: '#fff', 'stroke-width': 2 });
}

// price bars: high/low pairs, one bar every 4px
const left = [413,418, 409,417, 401,419, 415,419, 410,418, 407,416, 407,412, 405,413, 403,412, 403,406, 390,406, 388,398, 387,391, 387,391,
  382,403, 384,392, 388,392, 388,395, 386,392, 379,387, 382,387, 382,388, 387,398, 393,399, 393,399, 381,396, 390,399, 394,401, 387,398, 387,398,
  382,393, 375,391, 366,395, 366,377, 362,386, 361,387, 353,365, 339,360, 342,358, 334,358];
const right = [241,246, 242,249, 239,244, 236,242, 231,243, 230,239, 236,244, 237,245, 242,255, 243,255, 241,250, 249,266, 260,266, 255,263,
  255,262, 253,262, 255,262, 258,263, 258,263, 253,262, 253,261, 252,258, 253,256, 248,256, 239,254, 245,257, 255,261, 255,277, 262,277, 266,293,
  279,295, 266,292, 252,271, 239,257, 246,262, 249,271, 226,262, 195,232, 196,217, 193,213, 192,207, 184,200, 182,198, 188,196, 180,193];
const price = document.getElementById('price');

function bars(list, x0) {
  let open = (list[0] + list[1]) / 2;
  for (let i = 0; i < list.length; i += 2) {
    const x = x0 + i * 2, hi = list[i], lo = list[i + 1];
    const next = i + 2 < list.length ? (list[i + 2] + list[i + 3]) / 2 : lo;
    const close = Math.round(Math.max(hi, Math.min(lo - 1, next)));
    const from = Math.round(Math.max(hi, Math.min(lo - 1, open)));
    add(price, 'rect', { x, y: hi, width: 1, height: lo - hi, fill: '#0f0' });
    add(price, 'rect', { x: x - 1, y: from, width: 1, height: 1, fill: '#0f0' });
    add(price, 'rect', { x: x + 1, y: close, width: 1, height: 1, fill: '#0f0' });
    open = close;
  }
}
bars(left, 13);
bars(right, 793);
add(price, 'rect', { x: 13, y: 192, width: 974, height: 1, fill: '#778899' });

// M30 OMA slope speed
const oma = document.getElementById('oma');
const omaPts = [13,-3, 166,-3, 171,3, 176,3, 182,-2, 206,-1, 212,1, 263,1, 269,-18, 383,-18, 389,1, 494,1, 501,-3, 514,-3, 521,2, 525,-3, 534,-3,
  541,2, 549,-2, 557,2, 576,2, 582,-6, 588,-13, 615,-13, 621,-1, 830,-1, 838,-7, 863,-7, 870,1, 901,1, 908,-11, 926,-11, 934,4, 941,21, 966,21, 969,0];
for (let x = 13; x < 970; x += 4) {
  const v = Math.round(valueAt(omaPts, x + 1));
  if (v > 1) add(oma, 'rect', { x, y: 459 - v, width: 3, height: v, fill: BLUE });
  if (v < -1) add(oma, 'rect', { x, y: 459, width: 3, height: -v, fill: PINK });
}
line(oma, omaPts, 459);
arrows(oma, [181,458, 269,463, 501,460, 525,460, 549,460, 581,462, 837,463, 909,464, 969,445], false, '#ff0', true);
arrows(oma, [172,457, 213,457, 389,465, 517,461, 541,460, 557,461, 621,468, 869,462, 933,461], true, GREEN, true);

// M30 one more average slope speed
const slope = document.getElementById('slope');
const slopePts = [13,-4, 38,-4, 47,1, 54,6, 70,7, 76,3, 85,3, 92,0, 98,-4, 122,-4, 132,2, 140,8, 145,6, 152,6, 157,9, 174,9, 180,1, 191,1, 198,5,
  215,5, 222,12, 229,35, 246,35, 252,22, 260,2, 269,-8, 285,-9, 293,-15, 300,-5, 308,5, 317,18, 333,18, 341,6, 365,6, 373,-3, 390,-3, 404,1,
  445,1, 452,-2, 470,-2, 478,2, 493,2, 500,-1, 514,-1, 520,2, 534,2, 543,-1, 549,-7, 558,3, 574,3, 581,0, 588,-15, 608,-16, 618,-11, 630,-3,
  636,-13, 662,-13, 669,14, 678,14, 685,-7, 702,-7, 709,0, 726,1, 734,6, 750,6, 757,0, 763,-8, 782,-8, 790,2, 808,2, 813,4, 820,1, 832,-1,
  852,-7, 870,-7, 885,2, 901,3, 908,-8, 926,-8, 934,6, 941,23, 957,23, 965,12, 971,11];
const slopeRuns = [40,PINK, 71,GREEN, 120,PINK, 143,GREEN, 151,PINK, 175,GREEN, 191,PINK, 247,GREEN, 295,PINK, 335,GREEN, 392,PINK, 448,GREEN,
  460,PINK, 493,GREEN, 505,PINK, 538,GREEN, 550,PINK, 574,GREEN, 607,PINK, 631,GREEN, 665,PINK, 679,GREEN, 703,PINK, 751,GREEN, 783,PINK,
  815,GREEN, 871,PINK, 901,GREEN, 927,PINK, 959,GREEN, 971,PINK];
for (let x = 13; x < 971; x++) {
  const v = Math.round(valueAt(slopePts, x));
  if (v) add(slope, 'rect', { x, y: v > 0 ? 521 - v : 521, width: 1, height: Math.abs(v), fill: colorAt(slopeRuns, x) });
}
line(slope, slopePts, 521);
arrows(slope, [13,516, 93,516, 269,514, 372,515, 453,521, 501,520, 549,524, 581,520, 685,516, 765,523, 829,517, 909,523], false, '#ff0');
arrows(slope, [45,523, 133,522, 309,531, 405,527, 477,522, 517,522, 557,522, 669,517, 709,532, 789,526, 885,523, 933,520], true, '#fff');

// one more average slope speed, stepped histogram
const speed = document.getElementById('speed');
const speedPts = [11,-3, 27,-4, 35,-2, 45,0, 53,1, 60,6, 69,11, 75,11, 80,9, 90,7, 105,3, 113,0, 119,-4, 127,-4, 137,-2, 147,2, 155,6, 163,12, 171,17,
  175,18, 179,16, 185,10, 191,6, 199,6, 203,9, 209,13, 217,18, 223,22, 229,30, 235,45, 241,58, 247,65, 251,57, 257,45, 261,33, 267,18, 275,3, 279,0,
  285,-6, 291,-11, 297,-17, 303,-18, 307,-15, 311,-8, 315,-1, 319,6, 325,13, 333,16, 343,17, 350,19, 358,20, 365,15, 371,9, 377,4, 383,1, 393,-1,
  403,2, 413,2, 421,-1, 431,0, 440,3, 447,3, 455,2, 463,-1, 475,1, 491,3, 499,1, 507,-1, 515,1, 525,1, 529,0, 535,3, 546,4, 553,2, 560,-1, 566,2,
  572,5, 577,5, 583,2, 587,-3, 593,-12, 598,-18, 602,-21, 608,-20, 616,-17, 623,-16, 630,-16, 636,-20, 643,-26, 648,-25, 653,-18, 659,-9, 665,-1,
  669,3, 674,2, 680,-2, 685,-8, 689,-10, 694,-11, 699,-8, 705,-4, 711,-2, 715,-1, 723,-2, 731,1, 737,4, 743,7, 747,8, 755,8, 760,6, 765,2, 769,0,
  775,-4, 783,-5, 793,-3, 803,-1, 811,1, 820,2, 830,1, 837,-1, 843,-5, 850,-8, 855,-8, 865,-7, 875,-5, 885,-2, 893,0, 900,1, 903,-2, 909,-7,
  917,-11, 925,-7, 931,-1, 935,4, 941,12, 947,23, 953,28, 957,31, 963,31, 967,29, 971,26];
const speedRuns = [27,ORANGE, 75,GREEN, 127,ORANGE, 175,GREEN, 199,ORANGE, 247,GREEN, 303,ORANGE, 359,GREEN, 395,ORANGE, 411,GREEN, 431,ORANGE,
  447,GREEN, 471,ORANGE, 491,GREEN, 511,ORANGE, 523,GREEN, 531,ORANGE, 547,GREEN, 563,ORANGE, 579,GREEN, 607,ORANGE, 623,GREEN, 647,ORANGE,
  675,GREEN, 695,ORANGE, 715,GREEN, 723,ORANGE, 755,GREEN, 783,ORANGE, 823,GREEN, 855,ORANGE, 899,GREEN, 919,ORANGE, 963,GREEN, 971,ORANGE];
for (let x = 11; x < 971; x += 4) {
  const v = Math.round(valueAt(speedPts, x + 2)) || 1;
  add(speed, 'rect', { x, y: v > 0 ? 610 - v : 610, width: 4, height: Math.abs(v), fill: colorAt(speedRuns, x) });
}
add(speed, 'path', { d: 'M13 635v5h5z', fill: '#778899' });
arrows(speed, [113,606, 281,587, 425,609, 465,608, 529,608, 561,608, 589,612, 681,602, 773,608, 833,608, 901,607], false, '#f00');
arrows(speed, [45,612, 141,612, 317,615, 433,611, 473,612, 537,610, 565,612, 669,618, 729,614, 805,612, 889,612, 933,612], true, GREEN);
```
